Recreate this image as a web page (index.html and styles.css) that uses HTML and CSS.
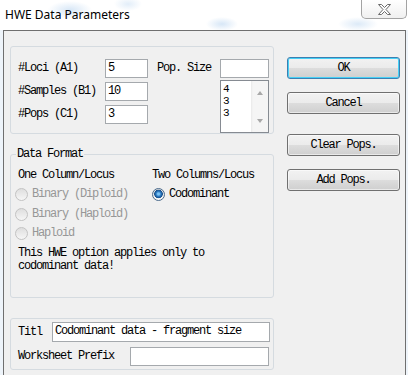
FILE: index.html
```html
<!DOCTYPE html>
<html>
<head>
<meta charset="utf-8">
<title>HWE Data Parameters</title>
<link rel="stylesheet" href="styles.css">
</head>
<body>
<div class="window">
    <div class="titlebar">
        <span class="caption">HWE Data Parameters</span>
        <span class="close">
            <svg width="13" height="11" viewBox="0 0 13 11">
                <polygon points="0.5,0.5 3.5,0.5 6.5,3.5 9.5,0.5 12.5,0.5 8,5.5 12.5,10.5 9.5,10.5 6.5,7.5 3.5,10.5 0.5,10.5 5,5.5" fill="#fdfdfd" stroke="#6b6b6b" stroke-width="1" stroke-linejoin="miter"/>
            </svg>
        </span>
    </div>

    <div class="client">
        <div class="groups">
            <div class="group counts">
                <span class="lbl">#Loci (A1)</span>
                <span class="edit">5</span>
                <span class="lbl popsize-lbl">Pop. Size</span>
                <span class="edit"></span>

                <span class="lbl">#Samples (B1)</span>
                <span class="edit">10</span>
                <div class="listbox">
                    <div class="items">
                        <div>4</div>
                        <div>3</div>
                        <div>3</div>
                    </div>
                    <div class="vscroll">
                        <span class="arrow up"></span>
                        <span class="arrow down"></span>
                    </div>
                </div>

                <span class="lbl">#Pops (C1)</span>
                <span class="edit">3</span>
            </div>

            <fieldset class="group format">
                <legend>Data Format</legend>
                <div class="format-grid">
                    <span class="head">One Column/Locus</span>
                    <span class="head">Two Columns/Locus</span>

                    <span class="radio disabled left"><span class="dot"></span>Binary (Diploid)</span>
                    <span class="radio"><span class="dot checked"></span>Codominant</span>

                    <span class="radio disabled left"><span class="dot"></span>Binary (Haploid)</span>
                    <span></span>

                    <span class="radio disabled left"><span class="dot"></span>Haploid</span>
                    <span></span>

                    <p class="note">This HWE option applies only to<br>codominant data!</p>
                </div>
            </fieldset>

            <div class="group names">
                <div class="row">
                    <span class="lbl titl">Titl</span>
                    <span class="edit wide">Codominant data - fragment size</span>
                </div>
                <div class="row">
                    <span class="lbl prefix">Worksheet Prefix</span>
                    <span class="edit wide prefix-edit"></span>
                </div>
            </div>
        </div>

        <div class="buttons">
            <span class="button default">OK</span>
            <span class="button">Cancel</span>
            <span class="button clear">Clear Pops.</span>
            <span class="button">Add Pops.</span>
        </div>
    </div>
</div>
</body>
</html>
```

FILE: styles.css
```css
* { box-sizing: border-box; }
body { margin: 0; background: #eef4fa; color: #000; font: 12px/13px "Liberation Mono", monospace; letter-spacing: -1.2px; }
.window { width: 408px; height: 375px; overflow: hidden; }

/* title bar */
.titlebar { height: 30px; display: flex; align-items: flex-start;
    background:
        radial-gradient(ellipse 22px 9px at 70px 10px, rgba(140,185,230,.35), transparent),
        radial-gradient(ellipse 16px 7px at 222px 24px, rgba(140,185,230,.35), transparent),
        radial-gradient(ellipse 20px 7px at 358px 24px, rgba(140,185,230,.30), transparent),
        radial-gradient(ellipse 14px 7px at 128px 4px, rgba(140,185,230,.25), transparent),
        #fff; }
.caption { font: 12px/14px "Noto Sans", sans-serif; letter-spacing: 0; margin: 8px 0 0 5px; }
.close { margin-left: auto; margin-right: 1px; width: 46px; height: 19px; border: 1px solid #a3a3a3; border-top: none;
    border-radius: 0 0 5px 5px; background: linear-gradient(#ffffff, #f0f0f0);
    display: flex; align-items: center; justify-content: center; }
.close svg { display: block; }

/* client area */
.client { margin-left: 3px; width: 403px; height: 345px; border: 1px solid #6f6f6f; border-bottom: none;
    background: #f0f0f0; display: flex; padding: 15px 0 0 6px; }
.groups { width: 264px; display: flex; flex-direction: column; }
.group { border: 1px solid #d5dbe0; border-radius: 3px; }

.edit { display: block; background: #fff; border: 1px solid #a5a9ad; padding: 2px 0 0 2px; white-space: nowrap; overflow: hidden; }
.lbl { align-self: center; white-space: nowrap; }

/* counts */
.counts { display: grid; grid-template-columns: 87px 43px 72px 49px; grid-template-rows: 19px 19px 19px; row-gap: 4px; padding: 12px 0 9px 7px; }
.counts > .lbl:not(.popsize-lbl) { grid-column: 1; }
.popsize-lbl { padding-left: 9px; }
.listbox { grid-column: 4; grid-row: 2 / span 2; align-self: start; margin-top: -2px; height: 53px;
    border: 1px solid #868b92; background: #fff; display: flex; }
.listbox .items { flex: 1; padding: 2px 0 0 2px; font-size: 11px; line-height: 12px; }
.vscroll { width: 17px; background: linear-gradient(90deg, #e9e9e9, #f5f5f5 2px, #f5f5f5); display: flex; flex-direction: column; justify-content: space-between; align-items: center; padding: 10px 0 9px; }
.arrow { width: 0; height: 0; border-left: 3.5px solid transparent; border-right: 3.5px solid transparent; }
.arrow.up { border-bottom: 4px solid #a8a8a8; }
.arrow.down { border-top: 4px solid #a8a8a8; }

/* data format */
.format { margin: 14px 0 0; min-width: 0; padding: 0 0 24px 7px; }
.format legend { padding: 0 1px; margin-left: -2px; line-height: 13px; }
.format-grid { display: grid; grid-template-columns: 134px 1fr; grid-template-rows: repeat(4, 13px) auto; row-gap: 6.3px; padding-top: 8px; }
.radio { display: flex; align-items: center; gap: 4px; white-space: nowrap; }
.radio.left { margin-left: -3px; }
.radio.disabled { color: #979797; }
.dot { width: 13px; height: 13px; border-radius: 50%; border: 1px solid #c3c3c3; background: linear-gradient(#dedede, #f6f6f6); flex: none; }
.dot.checked { border-color: #4b6b8c;
    background: radial-gradient(circle at 50% 45%, #7cc4f5 0 1px, #2a78c0 2.5px, #17508c 4px, transparent 4.6px), linear-gradient(#dcdcdc, #f8f8f8); }
.note { grid-column: 1 / span 2; margin: 1px 0 0; }

/* names */
.names { margin-top: 20px; padding: 3px 3px 3px 7px; display: flex; flex-direction: column; gap: 5px; }
.names .row { display: flex; align-items: center; }
.titl { width: 34px; }
.prefix { width: 112px; }
.wide { flex: 1; height: 20px; }
.prefix-edit { height: 19px; margin-right: 1px; }

/* buttons */
.buttons { width: 113px; margin-left: 13px; padding-top: 11px; display: flex; flex-direction: column; gap: 13px; }
.button { height: 22px; border: 1px solid #707070; border-radius: 3px;
    background: linear-gradient(#f2f2f2, #ebebeb 50%, #dddddd 50%, #cfcfcf);
    box-shadow: inset 0 0 0 1px rgba(255,255,255,.55);
    display: flex; align-items: center; justify-content: center; }
.button.default { border-color: #3c7fb1; box-shadow: inset 0 0 0 1px #46d0f6; }
.button.clear { margin-top: 7px; }
```
